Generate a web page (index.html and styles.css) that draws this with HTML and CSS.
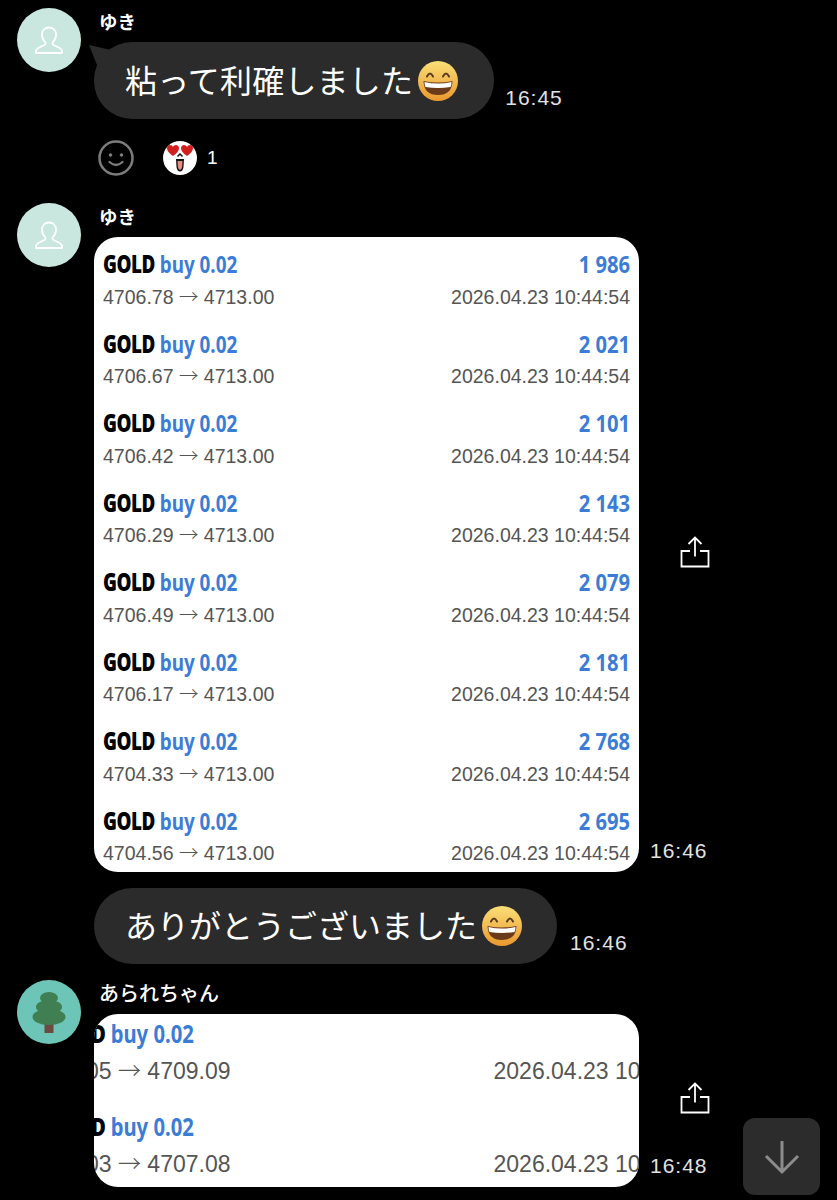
FILE: index.html
```html
<!DOCTYPE html>
<html lang="ja">
<head>
  <meta charset="UTF-8" />
  <meta name="viewport" content="width=device-width, initial-scale=1.0"/>
  <title>Chat</title>
  <link rel="stylesheet" href="styles.css">
</head>
<body>
  <svg class="defs" width="0" height="0">
    <defs>
      <linearGradient id="face" x1="0" y1="0" x2="0" y2="1">
        <stop offset="0" stop-color="#fbdf78"/>
        <stop offset="1" stop-color="#e9982e"/>
      </linearGradient>
      <symbol id="grin" viewBox="0 0 40 40">
        <circle cx="20" cy="20" r="20" fill="url(#face)"/>
        <path d="M9 15.500q3-6 6 0M25 15.500q3-6 6 0" fill="none" stroke="#5a3a1c" stroke-width="2" stroke-linecap="round"/>
        <path d="M5.500 20q14.500 3 29 0q-.5 14-14.500 14t-14.500-14z" fill="#6b3a1a"/>
        <path d="M6.500 21q13.500 3 27 0q0 3-1 5q-12.500 2-25 0q-1-2-1-5z" fill="#fff"/>
      </symbol>
      <symbol id="person" viewBox="0 0 64 64">
        <path d="M32 19.500c-4.300 0-7 3-7 7.200 0 3.200 1.300 5.500 3 7.300 .9 1 .7 2.400-.6 3l-6 3c-1.700.9-2.400 1.900-2.400 3.300V45h26v-1.700c0-1.400-.7-2.400-2.400-3.300l-6-3c-1.300-.6-1.500-2-.6-3 1.700-1.800 3-4.100 3-7.300 0-4.200-2.700-7.200-7-7.200z" fill="none" stroke="#fff" stroke-width="1.800" stroke-linejoin="round"/>
      </symbol>
      <symbol id="share" viewBox="0 0 30 32">
        <path d="M15 1.500v19M8.500 8L15 1.500 21.500 8M10 15H1.500v15.500h27V15H20" fill="none" stroke="#fff" stroke-width="1.800"/>
      </symbol>
      <path id="heart" d="M6 11C2 8 0 5.500 0 3.200 0 1.300 1.400 0 3 0 4.200 0 5.400.7 6 1.900 6.600.7 7.800 0 9 0c1.600 0 3 1.300 3 3.200C12 5.500 10 8 6 11z" fill="#d2201f"/>
    </defs>
  </svg>

  <div class="chat">
    <div class="msg">
      <svg class="avatar"><use href="#person"/></svg>
      <div class="body">
        <div class="name">ゆき</div>
        <div class="line">
          <div class="bubble bubble-first">粘って利確しました<svg class="emoji"><use href="#grin"/></svg></div>
          <span class="time">16:45</span>
        </div>
        <div class="reactions">
          <svg class="react-add" viewBox="0 0 36 36">
            <circle cx="18" cy="18" r="16.500" fill="none" stroke="#7c7c7c" stroke-width="2.500"/>
            <circle cx="12.500" cy="15" r="1.800" fill="#7c7c7c"/>
            <circle cx="23.500" cy="15" r="1.800" fill="#7c7c7c"/>
            <path d="M11.500 22q6.500 6 13 0" fill="none" stroke="#7c7c7c" stroke-width="2.200" stroke-linecap="round"/>
          </svg>
          <svg class="sticker" viewBox="0 0 34 34">
            <circle cx="17" cy="17" r="17" fill="#fff"/>
            <use href="#heart" x="4" y="4"/>
            <use href="#heart" x="18" y="4"/>
            <path d="M14.500 15.500l2.500-2.500 2.500 2.500" fill="none" stroke="#111" stroke-width="1.500"/>
            <path d="M13 18h8l-.5 8q-.8 4.500-3.500 4.500t-3.500-4.500z" fill="#111"/>
            <path d="M14.500 20h5l-.4 6q-.6 3-2.100 3t-2.100-3z" fill="#e98c80"/>
          </svg>
          <span class="react-count">1</span>
        </div>
      </div>
    </div>

    <div class="msg msg-next">
      <svg class="avatar"><use href="#person"/></svg>
      <div class="body">
        <div class="name">ゆき</div>
        <div class="line">
          <div class="card">
            <div class="row"><div class="title"><span><b>GOLD</b> buy 0.02</span><span>1 986</span></div><div class="sub"><span>4706.78 <i>→</i> 4713.00</span><span>2026.04.23 10:44:54</span></div></div>
            <div class="row"><div class="title"><span><b>GOLD</b> buy 0.02</span><span>2 021</span></div><div class="sub"><span>4706.67 <i>→</i> 4713.00</span><span>2026.04.23 10:44:54</span></div></div>
            <div class="row"><div class="title"><span><b>GOLD</b> buy 0.02</span><span>2 101</span></div><div class="sub"><span>4706.42 <i>→</i> 4713.00</span><span>2026.04.23 10:44:54</span></div></div>
            <div class="row"><div class="title"><span><b>GOLD</b> buy 0.02</span><span>2 143</span></div><div class="sub"><span>4706.29 <i>→</i> 4713.00</span><span>2026.04.23 10:44:54</span></div></div>
            <div class="row"><div class="title"><span><b>GOLD</b> buy 0.02</span><span>2 079</span></div><div class="sub"><span>4706.49 <i>→</i> 4713.00</span><span>2026.04.23 10:44:54</span></div></div>
            <div class="row"><div class="title"><span><b>GOLD</b> buy 0.02</span><span>2 181</span></div><div class="sub"><span>4706.17 <i>→</i> 4713.00</span><span>2026.04.23 10:44:54</span></div></div>
            <div class="row"><div class="title"><span><b>GOLD</b> buy 0.02</span><span>2 768</span></div><div class="sub"><span>4704.33 <i>→</i> 4713.00</span><span>2026.04.23 10:44:54</span></div></div>
            <div class="row"><div class="title"><span><b>GOLD</b> buy 0.02</span><span>2 695</span></div><div class="sub"><span>4704.56 <i>→</i> 4713.00</span><span>2026.04.23 10:44:54</span></div></div>
          </div>
          <div class="side">
            <svg class="share"><use href="#share"/></svg>
            <span class="time">16:46</span>
          </div>
        </div>
      </div>
    </div>

    <div class="msg-cont">
      <div class="line">
        <div class="bubble bubble-plain">ありがとうございました<svg class="emoji"><use href="#grin"/></svg></div>
        <span class="time time-wide">16:46</span>
      </div>
    </div>

    <div class="msg msg-last">
      <svg class="avatar avatar-tree" viewBox="0 0 64 64">
        <rect x="27.500" y="44" width="9" height="9" fill="#6b4a40"/>
        <ellipse cx="32" cy="18" rx="9" ry="6" fill="#3f7f52"/>
        <ellipse cx="32" cy="27" rx="13" ry="7" fill="#3f7f52"/>
        <ellipse cx="32" cy="37" rx="16.500" ry="8" fill="#3f7f52"/>
      </svg>
      <div class="body">
        <div class="name name-long">あられちゃん</div>
        <div class="line">
          <div class="card card-zoom">
            <div class="row-zoom"><div class="title-zoom"><b>D</b> buy 0.02</div><div class="sub-zoom"><span>05 <i>→</i> 4709.09</span><span class="date-zoom">2026.04.23 10</span></div></div>
            <div class="row-zoom"><div class="title-zoom"><b>D</b> buy 0.02</div><div class="sub-zoom"><span>03 <i>→</i> 4707.08</span><span class="date-zoom">2026.04.23 10</span></div></div>
          </div>
          <div class="side">
            <svg class="share"><use href="#share"/></svg>
            <span class="time">16:48</span>
          </div>
        </div>
      </div>
    </div>
  </div>

  <div class="scroll-down">
    <svg viewBox="0 0 36 36" width="36" height="36">
      <path d="M18 2v31M2 17l16 16 16-16" fill="none" stroke="#8c8c8c" stroke-width="3"/>
    </svg>
  </div>
</body>
</html>
```

FILE: styles.css
```css
* { box-sizing: border-box; }

html, body {
  height: 1200px;
}

body {
  margin: 0;
  background: #000;
  color: #fff;
  font-family: "Liberation Sans", "Noto Sans CJK JP", sans-serif;
  position: relative;
  overflow: hidden;
}

.defs {
  position: absolute;
}

.chat {
  padding: 8px 0 0 17px;
}

.msg {
  display: flex;
  gap: 13px;
}

.msg-next {
  margin-top: 27px;
}

.msg-last {
  margin-top: 16px;
}

.msg-cont {
  margin-top: 16px;
  padding-left: 77px;
}

.avatar {
  width: 64px;
  height: 64px;
  flex: none;
  border-radius: 50%;
  background: #c9e7df;
}

.avatar-tree {
  background: #6cc5b6;
}

.name {
  height: 26px;
  margin-bottom: 8px;
  padding-left: 5px;
  font-family: "Noto Sans CJK JP", sans-serif;
  font-size: 18.500px;
  font-weight: 700;
  line-height: 26px;
}

.name-long {
  font-size: 20px;
  font-weight: 500;
}

.line {
  display: flex;
  align-items: flex-end;
}

.bubble {
  position: relative;
  display: flex;
  align-items: center;
  height: 77px;
  padding: 0 36px 4px 31px;
  border-radius: 38px;
  background: #2b2b2b;
  font-family: "Noto Sans CJK JP", sans-serif;
  font-size: 32px;
  font-weight: 400;
  white-space: nowrap;
}

.bubble::before {
  content: "";
  position: absolute;
  left: -5px;
  top: 3px;
  width: 30px;
  height: 30px;
  background: #2b2b2b;
  clip-path: polygon(0 0, 22px 5px, 30px 30px, 8px 20px);
}

.bubble-first {
  letter-spacing: 0.2px;
}

.bubble-plain {
  height: 76px;
  padding-right: 35px;
}

.bubble-plain::before {
  display: none;
}

.emoji {
  width: 40px;
  height: 40px;
  margin: 4px 0 0 5px;
  flex: none;
}

.time {
  margin: 0 0 9px 11px;
  color: #e2e2e2;
  font-size: 21px;
  letter-spacing: 1px;
  line-height: 24px;
  white-space: nowrap;
}

.time-wide {
  margin-left: 13px;
}

.reactions {
  display: flex;
  align-items: center;
  height: 36px;
  margin: 21px 0 0 4px;
}

.react-add {
  width: 36px;
  height: 36px;
}

.sticker {
  width: 34px;
  height: 34px;
  margin-left: 29px;
}

.react-count {
  margin-left: 10px;
  font-size: 19px;
}

.card {
  width: 545px;
  height: 635px;
  padding: 11px 9px 0;
  border-radius: 24px;
  background: #fff;
  overflow: hidden;
  flex: none;
}

.row {
  height: 64px;
  margin-bottom: 15.57px;
}

.title,
.sub {
  display: flex;
  justify-content: space-between;
}

.title {
  height: 32px;
  color: #3b7dd6;
  font-family: "Noto Sans", sans-serif;
  font-size: 24px;
  font-weight: 700;
  line-height: 32px;
}

.title span {
  display: inline-block;
}

.title span:first-child {
  transform: scaleX(0.785);
  transform-origin: left;
}

.title span:last-child {
  transform: scaleX(0.84);
  transform-origin: right;
}

.title b,
.title-zoom b {
  color: #000;
  letter-spacing: -0.6px;
}

.sub {
  height: 30px;
  margin-top: 1.500px;
  color: #555;
  font-size: 19.500px;
  line-height: 30px;
}

.sub i,
.sub-zoom i {
  font-family: "Noto Sans CJK JP", sans-serif;
  font-style: normal;
  font-weight: 300;
  line-height: 0;
}

.side {
  display: grid;
  grid-template-rows: 1fr auto 1fr;
  align-self: stretch;
  width: 71px;
}

.share {
  grid-row: 2;
  justify-self: end;
  width: 30px;
  height: 32px;
  margin-bottom: 6px;
}

.side .time {
  grid-row: 3;
  align-self: end;
}

.card-zoom {
  height: 173px;
  padding: 2px 0 0;
}

.row-zoom {
  height: 92.500px;
}

.title-zoom,
.sub-zoom {
  white-space: nowrap;
}

.title-zoom {
  height: 34px;
  margin-left: -3px;
  color: #3b7dd6;
  font-family: "Noto Sans", sans-serif;
  font-size: 25px;
  font-weight: 700;
  line-height: 34px;
  transform: scaleX(0.81);
  transform-origin: left;
}

.sub-zoom {
  display: flex;
  height: 36px;
  margin: 3px 0 0 -8px;
  color: #555;
  font-size: 23px;
  line-height: 36px;
}

.date-zoom {
  margin-left: 263px;
}

.scroll-down {
  position: absolute;
  left: 743px;
  top: 1118px;
  display: flex;
  align-items: center;
  justify-content: center;
  width: 77px;
  height: 77px;
  border-radius: 12px;
  background: #2c2c2c;
}
```
